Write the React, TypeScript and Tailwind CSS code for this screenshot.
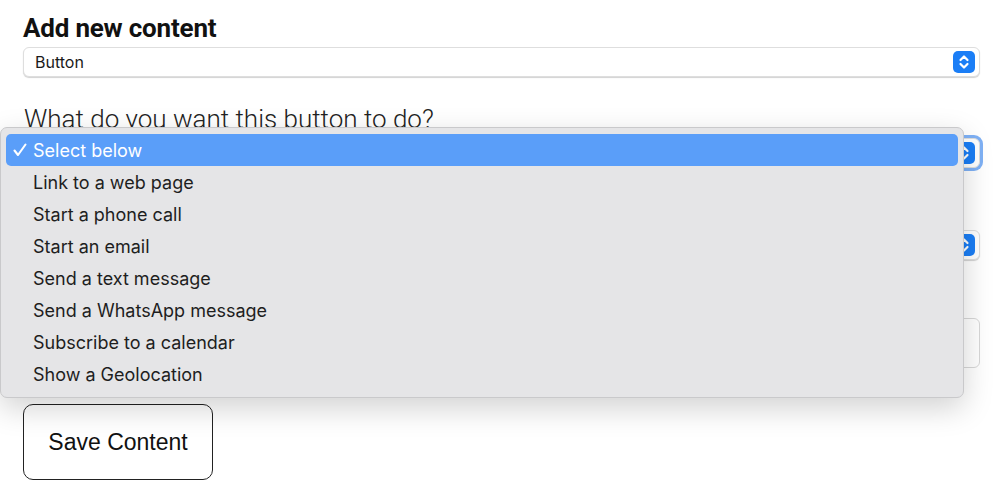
import React from 'react';

const OPTIONS = [
  'Link to a web page',
  'Start a phone call',
  'Start an email',
  'Send a text message',
  'Send a WhatsApp message',
  'Subscribe to a calendar',
  'Show a Geolocation',
];

function Stepper() {
  return (
    <span className="w-[22px] h-[22px] rounded-[5px] bg-[#1b7ef6] flex items-center justify-center">
      <svg width="12" height="16" viewBox="0 0 12 16" fill="none" stroke="white" strokeWidth="2.2" strokeLinecap="round" strokeLinejoin="round">
        <path d="M2.5 6 L6 2.5 L9.5 6" />
        <path d="M2.5 10 L6 13.5 L9.5 10" />
      </svg>
    </span>
  );
}

function FakeSelect({ value, focused }: { value?: string; focused?: boolean }) {
  return (
    <div
      className={`h-[30px] w-[957px] rounded-[6px] bg-white border border-[#dedede] shadow-[0_1px_1px_rgba(0,0,0,0.18)] flex items-center justify-between pl-[11px] pr-[4px] ${focused ? 'ring-[3px] ring-[#7fb1f5]' : ''}`}
    >
      <span className="text-[16px] text-[#1a1a1a]" style={{ fontFamily: 'Inter, "Noto Sans", sans-serif' }}>{value}</span>
      <Stepper />
    </div>
  );
}

export default function App() {
  return (
    <div className="relative w-[1000px] h-[495px] bg-white overflow-hidden" style={{ fontFamily: 'Roboto, "Noto Sans", sans-serif' }}>
      <div className="pl-[23px] pt-[13px] flex flex-col">
        <h2 className="text-[26px] font-bold text-[#111] leading-[30px] tracking-[-0.2px]">Add new content</h2>
        <div className="mt-[4px]">
          <FakeSelect value="Button" />
        </div>
        <p className="mt-[27px] text-[26px] font-light text-[#222] leading-[30px] pl-[1px]">What do you want this button to do?</p>
        <div className="mt-[4px]">
          <FakeSelect focused />
        </div>
        {/* label hidden behind the open menu */}
        <div className="h-[62px]" />
        <FakeSelect />
        <div className="h-[58px]" />
        <div className="h-[50px] w-[957px] rounded-[6px] border border-[#d8d8d8] bg-white" />
        <button
          className="mt-[36px] w-[190px] h-[76px] rounded-[10px] border border-[#222] bg-white text-[23px] text-[#111]"
          style={{ fontFamily: '"Liberation Sans", Arial, sans-serif' }}
        >
          Save Content
        </button>
      </div>

      {/* open dropdown menu */}
      <div
        className="absolute left-0 top-[127px] w-[964px] h-[271px] rounded-[7px] bg-[#e5e5e7] border border-[#c9c9cb] shadow-[0_10px_30px_rgba(0,0,0,0.18)] px-[5px] pt-[6px]"
        style={{ fontFamily: 'Inter, "Noto Sans", sans-serif' }}
      >
        <div className="h-[32px] rounded-[5px] bg-[#5a9ef9] flex items-center text-white text-[18px]">
          <span className="w-[27px] pl-[7px] flex items-center">
            <svg width="14" height="14" viewBox="0 0 14 14" fill="none" stroke="white" strokeWidth="2.1" strokeLinecap="round" strokeLinejoin="round">
              <path d="M1.5 7.5 L5 12 L12.5 1.5" />
            </svg>
          </span>
          <span>Select below</span>
        </div>
        {OPTIONS.map((o) => (
          <div key={o} className="h-[32px] flex items-center pl-[27px] text-[18px] text-[#1e1e1e]">
            {o}
          </div>
        ))}
      </div>
    </div>
  );
}
